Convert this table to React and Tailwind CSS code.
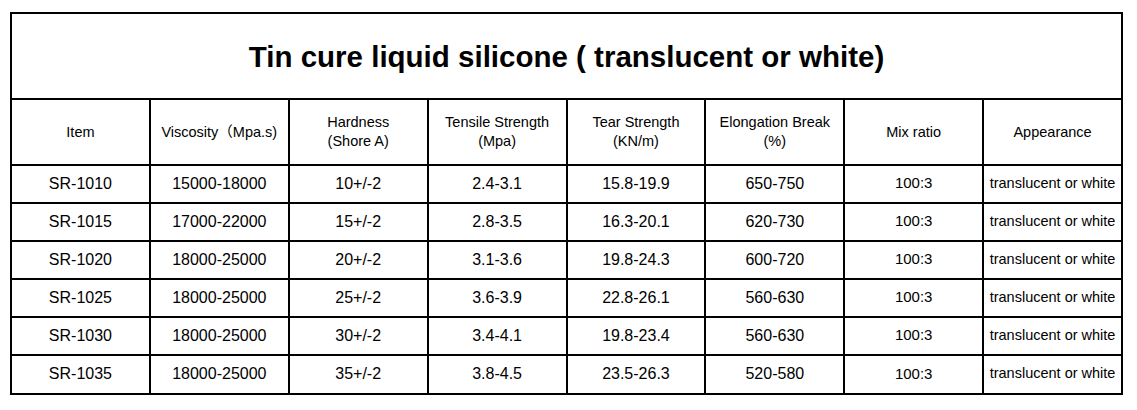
import React from "react";

const headers = [
  ["Item"],
  ["Viscosity（Mpa.s)"],
  ["Hardness", "(Shore A)"],
  ["Tensile Strength", "(Mpa)"],
  ["Tear Strength", "(KN/m)"],
  ["Elongation Break", "(%)"],
  ["Mix ratio"],
  ["Appearance"],
];

const rows = [
  ["SR-1010", "15000-18000", "10+/-2", "2.4-3.1", "15.8-19.9", "650-750", "100:3", "translucent or white"],
  ["SR-1015", "17000-22000", "15+/-2", "2.8-3.5", "16.3-20.1", "620-730", "100:3", "translucent or white"],
  ["SR-1020", "18000-25000", "20+/-2", "3.1-3.6", "19.8-24.3", "600-720", "100:3", "translucent or white"],
  ["SR-1025", "18000-25000", "25+/-2", "3.6-3.9", "22.8-26.1", "560-630", "100:3", "translucent or white"],
  ["SR-1030", "18000-25000", "30+/-2", "3.4-4.1", "19.8-23.4", "560-630", "100:3", "translucent or white"],
  ["SR-1035", "18000-25000", "35+/-2", "3.8-4.5", "23.5-26.3", "520-580", "100:3", "translucent or white"],
];

const sizeFor = (i) =>
  i === 7 ? "text-[14.5px]" : i === 6 ? "text-[15px]" : "text-[16px]";

export default function App() {
  return (
    <div className="bg-white w-[1137px] h-[410px] pt-[12px] pl-[10px] font-['Liberation_Sans','Noto_Sans_CJK_SC',Arial,sans-serif] text-black">
      <div className="w-[1113px] border-l-2 border-t-2 border-black">
        <div className="h-[86px] border-r-2 border-b-2 border-black flex items-center justify-center text-[29.5px] font-bold pt-[2px]">
          Tin cure liquid silicone ( translucent or white)
        </div>
        <div className="grid grid-cols-8">
          {headers.map((h, i) => (
            <div
              key={i}
              className="h-[66px] border-r-2 border-b-2 border-black flex flex-col items-center justify-center text-[14.5px] leading-[19px] text-center"
            >
              {h.map((line, j) => (
                <span key={j}>{line}</span>
              ))}
            </div>
          ))}
          {rows.map((r, ri) =>
            r.map((c, ci) => (
              <div
                key={ri + "-" + ci}
                className={
                  (ri === rows.length - 1 ? "h-[39px] " : "h-[38px] ") +
                  "border-r-2 border-b-2 border-black flex items-center justify-center whitespace-nowrap pb-[1px] " +
                  sizeFor(ci)
                }
              >
                {c}
              </div>
            ))
          )}
        </div>
      </div>
    </div>
  );
}
